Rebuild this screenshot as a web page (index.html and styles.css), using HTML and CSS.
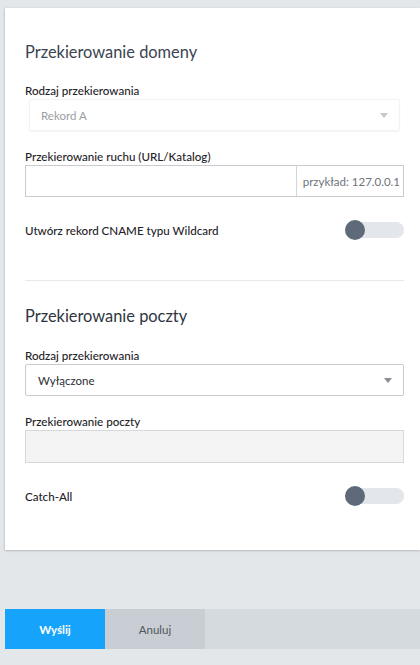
FILE: index.html
```html
<!DOCTYPE html>
<html lang="pl">
<head>
<meta charset="utf-8">
<link rel="stylesheet" href="styles.css">
</head>
<body>
<div class="card">
  <h2 class="heading">Przekierowanie domeny</h2>
  <div class="field">
    <label class="label">Rodzaj przekierowania</label>
    <div class="select select-disabled">
      <span>Rekord A</span>
      <svg class="arrow" width="8" height="5" viewBox="0 0 8 5"><path d="M0 0H8L4 5Z" fill="#c4c8cc"/></svg>
    </div>
  </div>
  <div class="field field-gap">
    <label class="label">Przekierowanie ruchu (URL/Katalog)</label>
    <div class="input-group">
      <div class="input-main"></div>
      <div class="addon">przykład: 127.0.0.1</div>
    </div>
  </div>
  <div class="toggle-row">
    <span class="toggle-label">Utwórz rekord CNAME typu Wildcard</span>
    <span class="toggle"><span class="knob"></span></span>
  </div>
  <hr class="divider">
  <h2 class="heading heading2">Przekierowanie poczty</h2>
  <div class="field field-gap2">
    <label class="label">Rodzaj przekierowania</label>
    <div class="select">
      <span class="select-value">Wyłączone</span>
      <svg class="arrow" width="8" height="5" viewBox="0 0 8 5"><path d="M0 0H8L4 5Z" fill="#8a8f95"/></svg>
    </div>
  </div>
  <div class="field field-gap">
    <label class="label">Przekierowanie poczty</label>
    <div class="input-disabled"></div>
  </div>
  <div class="toggle-row">
    <span class="toggle-label">Catch-All</span>
    <span class="toggle"><span class="knob"></span></span>
  </div>
</div>
<div class="actions">
  <button class="btn btn-primary">Wyślij</button>
  <button class="btn btn-secondary">Anuluj</button>
</div>
</body>
</html>
```
FILE: styles.css
```css
html, body {
  margin: 0;
  padding: 0;
}
body {
  background: #e4e7ea;
  font-family: Lato, "Open Sans", sans-serif;
  color: #1f2328;
  width: 420px;
  height: 665px;
  overflow: hidden;
}
.card {
  margin: 8px 0 0 5px;
  background: #fff;
  padding: 34px 16px 44px 20px;
  box-shadow: 0 1px 2px rgba(0,0,0,0.18), -1px 0 2px rgba(0,0,0,0.06);
}
.heading {
  margin: 0;
  font-size: 16.4px;
  line-height: 20px;
  font-weight: 400;
  color: #3a4350;
}
.heading2 { color: #2e3540; }
.field {
  display: flex;
  flex-direction: column;
  margin-top: 22px;
}
.field-gap { margin-top: 19px; }
.field-gap2 { margin-top: 23px; }
.label {
  font-size: 11.6px;
  line-height: 14px;
  margin-bottom: 1px;
  color: #1f2328;
  font-weight: 500;
}
.select {
  height: 32px;
  box-sizing: border-box;
  border: 1px solid #c8ccd0;
  border-radius: 2px;
  display: flex;
  align-items: center;
  justify-content: space-between;
  padding: 0 11px 0 12px;
  font-size: 11.5px;
  color: #333;
}
.select-disabled {
  margin: 0 4px;
  border-color: #f1f2f3;
  box-shadow: 0 1px 2px rgba(0,0,0,0.04);
  color: #9a9ea3;
  padding-left: 11px;
}
.select-value { color: #2b2f33; }
.input-group {
  display: flex;
  height: 32px;
  box-sizing: border-box;
  border: 1px solid #c8ccd0;
}
.input-main { flex: 1; }
.addon {
  border-left: 1px solid #d3d6d9;
  width: 107px;
  box-sizing: border-box;
  display: flex;
  align-items: center;
  justify-content: flex-end;
  padding-right: 3px;
  font-size: 11.5px;
  color: #6e7378;
}
.input-disabled {
  height: 33px;
  box-sizing: border-box;
  border: 1px solid #d6d9dc;
  background: #f4f4f4;
}
.toggle-row {
  display: flex;
  align-items: center;
  justify-content: space-between;
  height: 20px;
  margin-top: 23px;
}
.toggle-label {
  font-size: 11.6px;
  color: #1f2328;
  font-weight: 500;
}
.toggle {
  position: relative;
  width: 59px;
  height: 16px;
  border-radius: 8px;
  background: #e3e6eb;
}
.knob {
  position: absolute;
  left: 0;
  top: -2px;
  width: 20px;
  height: 20px;
  border-radius: 50%;
  background: #5e6a79;
}
.divider {
  border: 0;
  border-top: 1px solid #e6e8ea;
  margin: 40px 0 0 0;
}
.heading2 { margin-top: 25px; }
.actions {
  display: flex;
  margin: 59px 0 0 5px;
  height: 40px;
  background: #d5dadf;
}
.btn {
  width: 100px;
  border: 0;
  margin: 0;
  font-family: Lato, "Open Sans", sans-serif;
  font-size: 11.5px;
}
.btn-primary {
  background: #16a3fb;
  color: #fff;
  font-weight: 700;
}
.btn-secondary {
  background: #c8ced4;
  color: #50565d;
}
```
